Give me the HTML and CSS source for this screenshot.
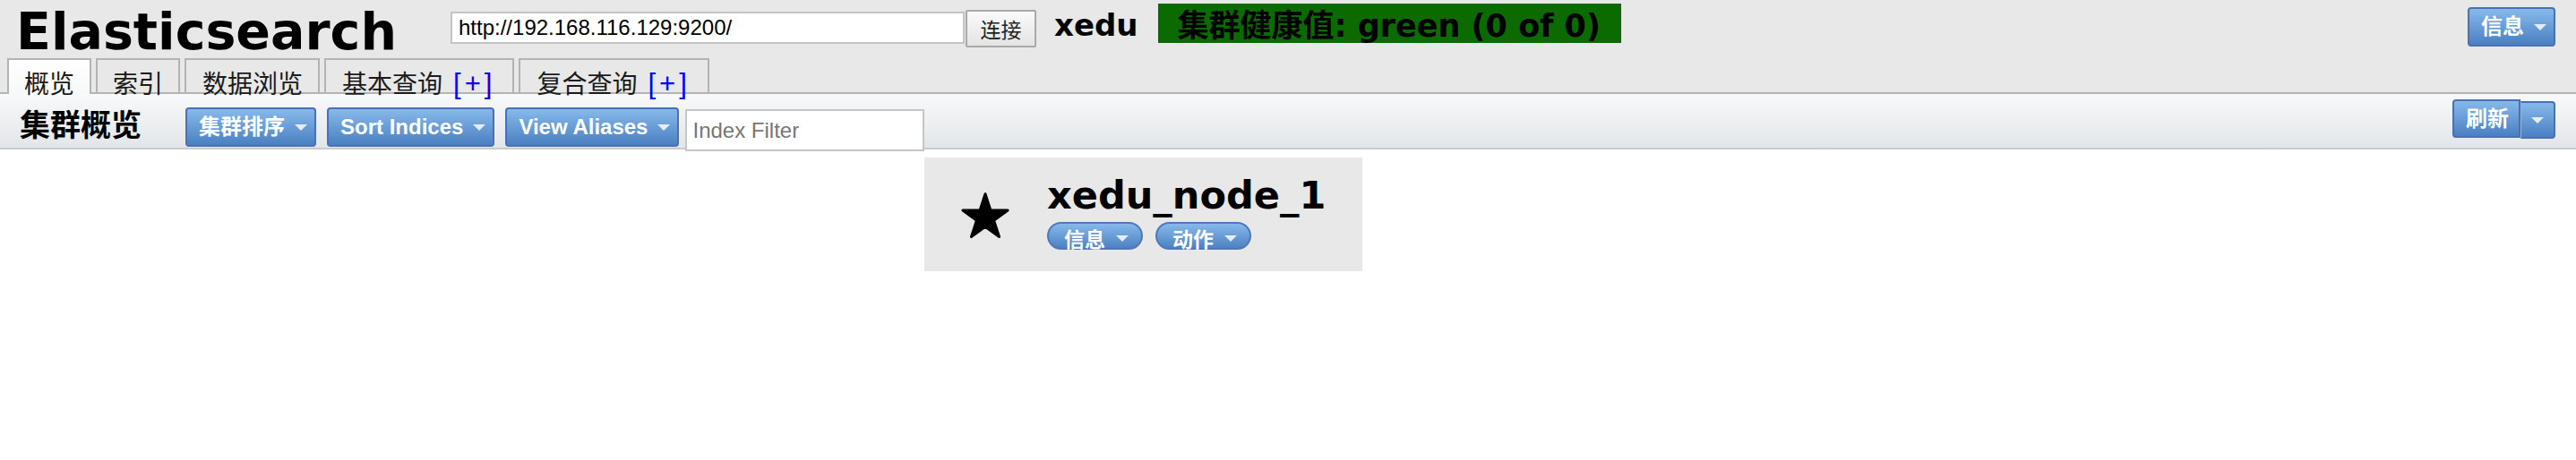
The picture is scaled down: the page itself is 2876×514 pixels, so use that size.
FILE: index.html
```html
<!DOCTYPE html>
<html lang="zh-CN">
<head>
<meta charset="utf-8">
<title>Elasticsearch Head</title>
<link rel="stylesheet" href="styles.css">
</head>
<body>
<div class="app">
  <header class="top">
    <div class="top-row">
      <h1 class="brand">Elasticsearch</h1>
      <input class="url" type="text" value="http://192.168.116.129:9200/">
      <button class="connect">连接</button>
      <span class="cluster-name">xedu</span>
      <span class="health">集群健康值: green (0 of 0)</span>
      <button class="btn btn-info">信息<span class="caret"></span></button>
    </div>
    <nav class="tabs">
      <div class="tab active">概览</div>
      <div class="tab">索引</div>
      <div class="tab">数据浏览</div>
      <div class="tab">基本查询<span class="plus">[+]</span></div>
      <div class="tab">复合查询<span class="plus">[+]</span></div>
    </nav>
  </header>
  <div class="toolbar">
    <h2 class="toolbar-title">集群概览</h2>
    <button class="btn tb-btn">集群排序<span class="caret"></span></button>
    <button class="btn tb-btn">Sort Indices<span class="caret"></span></button>
    <button class="btn tb-btn tb-last">View Aliases<span class="caret"></span></button>
    <input class="filter" type="text" placeholder="Index Filter">
    <div class="split">
      <button class="btn split-main">刷新</button>
      <button class="btn split-drop"><span class="caret"></span></button>
    </div>
  </div>
  <main class="overview">
    <div class="node">
      <svg class="star" width="54" height="52" viewBox="0 0 54 52" aria-hidden="true">
        <path d="M27 1.8 L32.93 20.04 L52.11 20.04 L36.59 31.31 L42.52 49.56 L27 38.28 L11.48 49.56 L17.41 31.31 L1.89 20.04 L21.07 20.04 Z" fill="#000" stroke="#000" stroke-width="3" stroke-linejoin="round"/>
      </svg>
      <div class="node-body">
        <div class="node-name">xedu_node_1</div>
        <div class="node-actions">
          <button class="pill">信息<span class="caret"></span></button>
          <button class="pill">动作<span class="caret"></span></button>
        </div>
      </div>
    </div>
  </main>
</div>
</body>
</html>
```

FILE: styles.css
```css
* { box-sizing: border-box; }
html, body { margin: 0; padding: 0; background: #fff; }
body {
  font-family: "Liberation Sans", "Noto Sans CJK SC", sans-serif;
  color: #000;
}
button { cursor: pointer; }

/* ---------- header ---------- */
.top { background: #e8e8e8; }
.top-row {
  display: flex;
  align-items: flex-start;
  height: 65px;
}
.brand {
  flex: none;
  width: 503px;
  margin: 7px 0 0;
  padding-left: 18px;
  font: bold 57px/57px "DejaVu Sans", sans-serif;
  white-space: nowrap;
}
.url {
  flex: none;
  margin-top: 13px;
  width: 574px;
  height: 36px;
  padding: 0 7px;
  border: 2px solid #c3c3c3;
  background: #fff;
  font: 24px "Liberation Sans", sans-serif;
  color: #000;
  outline: none;
}
.connect {
  flex: none;
  margin: 11px 0 0 1px;
  width: 79px;
  height: 42px;
  padding: 0;
  border: 2px solid #a9a9a9;
  border-radius: 2px;
  background: linear-gradient(#fafafa, #e4e4e4);
  font: 23px/1 "Noto Sans CJK SC", sans-serif;
  color: #222;
}
.cluster-name {
  flex: none;
  margin: 11px 0 0 20px;
  font: bold 34px/34px "DejaVu Sans", sans-serif;
}
.health {
  flex: none;
  margin: 4px 0 0 22px;
  height: 44px;
  padding: 0 23px 0 22px;
  background: #0b6b00;
  color: #000;
  font: bold 35px/50px "DejaVu Sans", "Noto Sans CJK SC", sans-serif;
  white-space: nowrap;
}

/* ---------- blue buttons ---------- */
.btn {
  display: inline-flex;
  align-items: center;
  flex: none;
  height: 44px;
  padding: 0 8px 0 13px;
  border: 2px solid #4b70b4;
  border-radius: 4px;
  background: linear-gradient(#86b9ea, #4a80c2);
  color: #fff;
  font: bold 24px/1 "Liberation Sans", "Noto Sans CJK SC", sans-serif;
  white-space: nowrap;
}
.caret {
  display: inline-block;
  width: 0;
  height: 0;
  margin-left: 11px;
  border-left: 7px solid transparent;
  border-right: 7px solid transparent;
  border-top: 7px solid #e3ecf7;
}
.btn-info { margin: 8px 23px 0 auto; }

/* ---------- tabs ---------- */
.tabs {
  display: flex;
  align-items: flex-start;
  gap: 5px;
  height: 40px;
  padding-left: 8px;
  border-bottom: 2px solid #b4b4b4;
}
.tab {
  height: 38px;
  padding: 11px 17px 0;
  border: 2px solid #b3b3b3;
  border-bottom: 0;
  background: #e8e8e8;
  color: #1a1a1a;
  font: 28px/28px "Noto Sans CJK SC", sans-serif;
  white-space: nowrap;
}
.tab:nth-child(3) { padding: 11px 17px 0 18px; }
.tab:nth-child(4), .tab:nth-child(5) { padding: 11px 19px 0 18px; }
.tab.active {
  height: 40px;
  background: linear-gradient(#ffffff, #f7f8f9);
}
.plus {
  margin-left: 12px;
  color: #0000ff;
  font-size: 31px;
  letter-spacing: 4px;
  font-family: "Liberation Sans", sans-serif;
}

/* ---------- toolbar ---------- */
.toolbar {
  display: flex;
  align-items: flex-start;
  height: 62px;
  padding-left: 22px;
  border-bottom: 2px solid #c9cbce;
  background: linear-gradient(#f8f9fa, #e3e6e9);
}
.toolbar-title {
  flex: none;
  margin: 16px 49px 0 0;
  font: bold 34px/34px "Noto Sans CJK SC", sans-serif;
}
.tb-btn { margin: 15px 12px 0 0; }
.tb-last { margin-right: 7px; }
.filter {
  flex: none;
  margin-top: 17px;
  width: 267px;
  height: 47px;
  padding: 0 6px;
  border: 2px solid #c6c6c6;
  background: #fff;
  font: 24px "Liberation Sans", sans-serif;
  color: #000;
  outline: none;
}
.filter::placeholder { color: #767676; }
.split {
  display: flex;
  align-items: flex-start;
  margin: 0 23px 0 auto;
}
.split-main {
  margin-top: 6px;
  width: 76px;
  height: 43px;
  padding: 0 0 0 13px;
  border-radius: 4px 0 0 4px;
}
.split-drop {
  margin-top: 8px;
  width: 39px;
  height: 42px;
  padding: 0;
  justify-content: center;
  border-left: 1px solid #8db5e0;
  border-radius: 0 4px 4px 0;
}
.split-drop .caret { margin-left: 0; }

/* ---------- overview ---------- */
.overview { padding: 9px 0 0 1032px; }
.node {
  display: inline-flex;
  align-items: center;
  padding: 21px 41px 24px 41px;
  background: #e8e8e8;
}
.star {
  flex: none;
  display: block;
  margin: 6px 42px 0 0;
}
.node-name {
  font: bold 43px/42px "DejaVu Sans", sans-serif;
  white-space: nowrap;
}
.node-actions {
  display: flex;
  gap: 14px;
  margin-top: 9px;
}
.pill {
  display: inline-flex;
  align-items: center;
  height: 31px;
  padding: 6px 14px 0 17px;
  border: 2px solid #5078b8;
  border-radius: 16px;
  background: linear-gradient(#86b9ea, #4c82c3);
  color: #fff;
  font: bold 23px/23px "Noto Sans CJK SC", sans-serif;
  white-space: nowrap;
}
.pill .caret { margin-left: 12px; }
```
